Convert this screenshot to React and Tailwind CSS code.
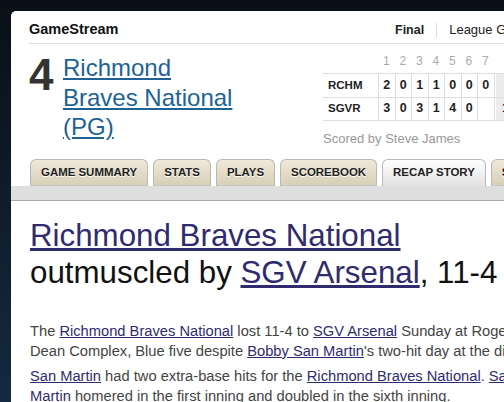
const innings = [1, 2, 3, 4, 5, 6, 7];

const lines = [
  { team: "RCHM", runs: ["2", "0", "1", "1", "0", "0", "0"], total: "4" },
  { team: "SGVR", runs: ["3", "0", "3", "1", "4", "0", ""], total: "11" },
];

const tabs = ["GAME SUMMARY", "STATS", "PLAYS", "SCOREBOOK", "RECAP STORY", "SHARE"];

const Scoreboard = () => (
  <div className="w-[210px]">
    <div className="flex h-[20px] pl-[55px]">
      {innings.map((n) => (
        <div key={n} className="w-[16.5px] text-center text-[12px] leading-[17px] text-[#aaa]">
          {n}
        </div>
      ))}
    </div>
    <div className="border-b border-[#ddd]">
      {lines.map((row) => (
        <div key={row.team} className="flex h-[23.5px] border-t border-[#ddd] text-[#222] font-bold">
          <div className="w-[55px] pl-[5px] flex items-center text-[11.5px]">{row.team}</div>
          {row.runs.map((r, i) => (
            <div key={i} className="w-[16.5px] border-l border-[#ddd] flex items-center justify-center text-[12.5px]">
              {r}
            </div>
          ))}
          <div className="border-l border-[#ddd] pl-[1px] flex">
            <div className="w-[26px] bg-[#ececec] flex items-center justify-center text-[12.5px]">{row.total}</div>
          </div>
        </div>
      ))}
    </div>
    <p className="mt-[10px] text-[13px] leading-[16px] text-[#999]">Scored by Steve James</p>
  </div>
);

const A = ({ children }) => <a href="#" className="text-[#2f2b6e] underline">{children}</a>;

export default function App() {
  return (
    <div className="w-[504px] h-[402px] overflow-hidden bg-gradient-to-b from-[#0a0f17] to-[#142a40] pt-[11px] pl-[11px] font-['Liberation_Sans',Arial,sans-serif]">
      <div className="w-[600px] h-[420px] bg-white rounded-tl-[5px]">
        {/* top bar */}
        <div className="ml-[18px] pt-[10px] pb-[4px] border-b border-[#ddd] flex items-baseline leading-[17px]">
          <div className="w-[366px] shrink-0 text-[14.5px] font-bold text-[#111]">GameStream</div>
          <span className="text-[12.5px] font-bold text-[#222]">Final</span>
          <span className="mx-[12px] w-px h-[14px] bg-[#ddd] self-center" />
          <span className="text-[13px] text-[#222]">League Game</span>
        </div>

        {/* score + line score */}
        <div className="ml-[18px] mt-[9px] flex">
          <div className="w-[294px] flex">
            <div className="w-[34px] text-[44px] leading-[44px] font-bold text-[#333]">4</div>
            <a href="#" className="w-[182px] text-[24px] leading-[29.5px] text-[#1e6394] underline">
              Richmond Braves National (PG)
            </a>
          </div>
          <Scoreboard />
        </div>

        {/* tabs */}
        <div className="mt-[12px] flex items-end gap-[5px] pl-[19px]">
          {tabs.map((t) => {
            const active = t === "RECAP STORY";
            return (
              <div
                key={t}
                className={
                  active
                    ? "h-[27px] px-[10px] flex items-center border border-b-0 border-[#b8b8b8] rounded-t-[6px] bg-gradient-to-b from-white to-[#e2e2e2] text-[11.45px] font-bold text-[#222] whitespace-nowrap"
                    : "h-[27px] px-[10px] flex items-center border border-[#b8b8b8] border-b-[#c6c6c6] rounded-t-[6px] bg-gradient-to-b from-[#efe9da] to-[#d8cfb6] text-[11.45px] font-bold text-[#222] whitespace-nowrap [text-shadow:0_1px_0_#fff]"
                }
              >
                {t}
              </div>
            );
          })}
        </div>
        <div className="h-[15px] bg-[#dedede] border-b border-[#a9a9a9]" />

        {/* recap story */}
        <div className="ml-[19px] pt-[16px] w-[512px]">
          <h1 className="text-[31.3px] leading-[37px] text-[#111]">
            <A>Richmond Braves National</A> outmuscled by <A>SGV Arsenal</A>, 11-4
          </h1>
          <p className="mt-[29.5px] text-[14.7px] leading-[20px] text-[#444]">
            The <A>Richmond Braves National</A> lost 11-4 to <A>SGV Arsenal</A> Sunday at Roger Dean Complex, Blue five
            despite <A>Bobby San Martin</A>'s two-hit day at the dish.
          </p>
          <p className="mt-[5px] text-[14.7px] leading-[20px] text-[#444]">
            <A>San Martin</A> had two extra-base hits for the <A>Richmond Braves National</A>. <A>San Martin</A> homered in
            the first inning and doubled in the sixth inning.
          </p>
        </div>
      </div>
    </div>
  );
}
